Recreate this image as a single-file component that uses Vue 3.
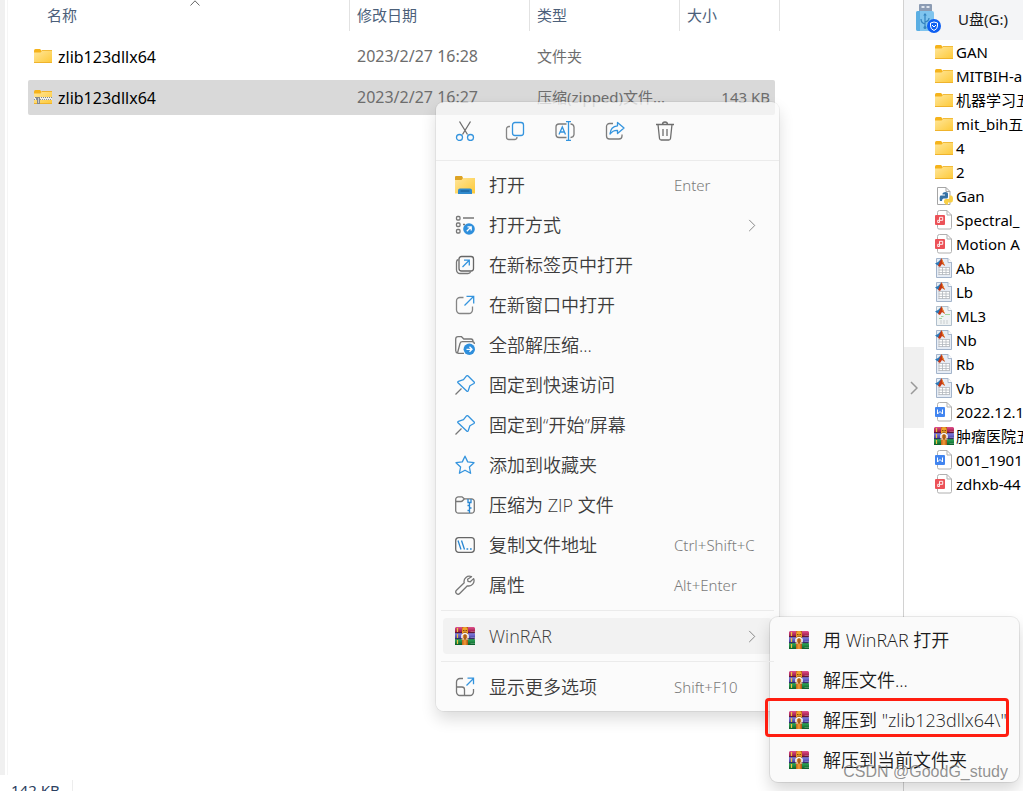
<template>
  <!-- Icon sprite -->
  <svg class="sprite" aria-hidden="true">
    <defs>
      <linearGradient id="g-folder" x1="0" y1="0" x2="1" y2="1">
        <stop offset="0" stop-color="#ffe69a" />
        <stop offset="1" stop-color="#fdc937" />
      </linearGradient>
      <linearGradient id="g-red" x1="0" y1="0" x2="0" y2="1">
        <stop offset="0" stop-color="#e0508c" />
        <stop offset="1" stop-color="#8c1038" />
      </linearGradient>
      <linearGradient id="g-blue" x1="0" y1="0" x2="0" y2="1">
        <stop offset="0" stop-color="#8a84e8" />
        <stop offset="1" stop-color="#3c3798" />
      </linearGradient>
      <linearGradient id="g-green" x1="0" y1="0" x2="0" y2="1">
        <stop offset="0" stop-color="#2fae5c" />
        <stop offset="1" stop-color="#0a5c28" />
      </linearGradient>
      <linearGradient id="g-belt" x1="0" y1="0" x2="1" y2="0">
        <stop offset="0" stop-color="#c0661a" />
        <stop offset="0.5" stop-color="#f59a38" />
        <stop offset="1" stop-color="#a8520e" />
      </linearGradient>
    </defs>

    <symbol id="i-folder" viewBox="0 0 18 14">
      <path d="M0 1.5Q0 0 1.5 0H6l2 2v3H0z" fill="#f5b31b" />
      <path d="M0 3.5h6.5L8 2h10v12H0z" fill="url(#g-folder)" />
      <path d="M8 1.500H18" stroke="#f2bb39" />
      <path d="M0 13.500H18" stroke="#efb32c" />
    </symbol>
    <symbol id="i-zip" viewBox="0 0 18 14">
      <path d="M0 1.500Q0 0 1.500 0H6l2 2v3H0z" fill="#f5b31b" />
      <path d="M0 3.500h6.500L8 1.500h10V14H0z" fill="url(#g-folder)" />
      <path d="M8 1.500H18M0 13.500H18" stroke="#efb32c" />
      <path d="M0 7h18v3H0z" fill="#f0efe9" />
      <path d="M1 7.500H18" stroke="#7d8790" stroke-dasharray="1 1" />
      <path d="M0 9.500H18" stroke="#8b939a" stroke-dasharray="1 1" />
      <path d="M2 7h4v7H3V9H2z" fill="#85898e" />
      <path d="M4.500 8v5" stroke="#c8ccd0" />
    </symbol>

    <symbol id="i-rar" viewBox="0 0 20 18">
      <path d="M1 0h18l1 1v4.500l-1 .5H0V1z" fill="url(#g-red)" />
      <path d="M0 6h19l1 .5V11l-1 1H0z" fill="url(#g-blue)" />
      <path d="M0 12h19l1 .5V18H0z" fill="url(#g-green)" />
      <path d="M0 5.800H20M0 11.800H20" stroke="#2b1c2c" stroke-width=".7" />
      <path d="M15.500 4.500H20M15.500 10.500H20M15.500 16.500H20" stroke="#fff" stroke-opacity=".3" stroke-width=".8" />
      <path d="M2.500 1v4M2.500 7v4M2.500 13v4" stroke="#efc13d" stroke-width="1.200" />
      <path d="M7 0h6v18H7z" fill="url(#g-belt)" />
      <path d="M7.500 1.500Q10-1 12.500 1.500L13 6H7z" fill="#f0a52c" />
      <path d="M8 3.500h1.500M10.500 3.500H12M8.500 5.300h3" stroke="#7d4107" stroke-width=".9" />
      <path d="M7 11V8.200Q10 4.800 13 8.200V11" fill="none" stroke="#f4f4f4" stroke-width="1.600" />
      <path d="M9.300 7.500h1.400v5H9.300z" fill="#8a4a12" />
      <path d="M6.500 12h2.500M11 12h2.500" stroke="#ddd" stroke-width="1.200" />
    </symbol>

    <symbol id="i-cut" viewBox="0 0 20 20">
      <g fill="none" stroke-width="1.300">
        <path d="M4.500.5l8 13M15.500.5l-8 13" stroke="#6e6e6e" />
        <circle cx="4.500" cy="16.500" r="3" stroke="#3494de" />
        <circle cx="15.500" cy="16.500" r="3" stroke="#3494de" />
      </g>
    </symbol>
    <symbol id="i-copy" viewBox="0 0 20 20">
      <g fill="none" stroke-width="1.300">
        <path d="M5 5.500H4A2.500 2.500 0 0 0 1.500 8v8A2.500 2.500 0 0 0 4 18.500h5.500A2.500 2.500 0 0 0 12 16" stroke="#868686" />
        <rect x="7.500" y="1.500" width="11" height="13" rx="2.500" stroke="#3494de" />
      </g>
    </symbol>
    <symbol id="i-rename" viewBox="0 0 20 20">
      <g fill="none" stroke-width="1.300">
        <path d="M11.500 3H4A3 3 0 0 0 1 6v7.500a3 3 0 0 0 3 3h7.500M15.500 3a3.500 3.500 0 0 1 3.500 3v7.500a3.500 3.500 0 0 1-3.500 3" stroke="#7c7c7c" />
        <path d="M4 13.500L7.300 6l3.200 7.500M5 11h4.500M13.500 1v18M11 .7h5M11 19.300h5" stroke="#3494de" />
      </g>
    </symbol>
    <symbol id="i-share" viewBox="0 0 20 20">
      <g fill="none" stroke-width="1.300" stroke-linejoin="round">
        <path d="M8 2.500H4.500A3 3 0 0 0 1.500 5.500V15a3 3 0 0 0 3 3H14a3 3 0 0 0 3-3v-1.500" stroke="#7c7c7c" />
        <path d="M12.500 1.500L19 7l-6.500 5.500V9.300Q8 9 5 13 5.500 5.500 12.500 4.800z" stroke="#3494de" />
      </g>
    </symbol>
    <symbol id="i-trash" viewBox="0 0 20 20">
      <path d="M1 3.500h18M7.500 3.500a2.500 2.500 0 0 1 5 0M3 3.500l1.500 14q.2 1.500 1.700 1.500h7.600q1.500 0 1.700-1.500L17 3.500M8 8v7M12 8v7" fill="none" stroke="#6e6e6e" stroke-width="1.300" />
    </symbol>

    <symbol id="i-open" viewBox="0 0 20 20">
      <path d="M0 2q0-1 1-1h6l1 2v3H0z" fill="#dda324" />
      <path d="M0 5h6.500L8 3h12v15.500H0z" fill="url(#g-folder)" />
      <path d="M3 19v-3.500a2 2 0 0 1 2-2h10a2 2 0 0 1 2 2V19z" fill="#2f89cc" />
      <path d="M5.500 16h9" stroke="#15558c" />
    </symbol>
    <symbol id="i-openwith" viewBox="0 0 20 20">
      <g fill="none" stroke="#777" stroke-width="1.300">
        <rect x="1.500" y="1.500" width="3.500" height="3.500" rx="1" />
        <rect x="1.500" y="8" width="3.500" height="3.500" rx="1" />
        <rect x="1.500" y="14.500" width="3.500" height="3.500" rx="1" />
        <path d="M8 3h11M8 9.500h2" />
      </g>
      <circle cx="14" cy="14" r="5.800" fill="#2f8fdc" />
      <path d="M11.800 16.200l4.200-4.200M12.500 11.800h3.700v3.700" fill="none" stroke="#fff" stroke-width="1.300" />
    </symbol>
    <symbol id="i-newtab" viewBox="0 0 20 20">
      <g fill="none" stroke-width="1.300">
        <rect x="4" y="1.500" width="14.500" height="14.500" rx="2.500" stroke="#666" />
        <path d="M3.500 4.500Q1.500 5 1.500 7v8a3.500 3.500 0 0 0 3.500 3.500h8q2 0 2.700-2" stroke="#777" />
        <path d="M7.500 12L14 5.500M9 5.200h5.300v5.300" stroke="#3494de" />
      </g>
    </symbol>
    <symbol id="i-newwin" viewBox="0 0 20 20">
      <g fill="none" stroke-width="1.300">
        <path d="M8.500 2.500H5A3.500 3.500 0 0 0 1.500 6v9A3.500 3.500 0 0 0 5 18.500h9a3.500 3.500 0 0 0 3.500-3.500v-3.500" stroke="#858585" />
        <path d="M9.500 10.500l9-9M11.500 1.300h7.200v7.200" stroke="#3494de" />
      </g>
    </symbol>
    <symbol id="i-extract" viewBox="0 0 20 20">
      <path d="M2.500 18Q.7 17.500.7 15.500V4Q.7 1.700 3 1.700h3.500l2.300 2.300H16Q18 4 18 6.500M2.500 18L5 8.500Q5.500 6.700 7.500 6.700H17q2.500 0 2.300 2.300M2.500 18.300H9" fill="none" stroke="#777" stroke-width="1.300" />
      <circle cx="14.300" cy="14.300" r="5.700" fill="#2f8fdc" />
      <path d="M11.500 14.300h5.300M14.500 11.800l2.500 2.500-2.500 2.500" fill="none" stroke="#fff" stroke-width="1.300" />
    </symbol>
    <symbol id="i-pin" viewBox="0 0 20 20">
      <g fill="none" stroke-width="1.300" stroke-linejoin="round">
        <path d="M.5 19.500l6-6" stroke="#777" />
        <path d="M11.500.9q.8-.6 1.600.1l6 6q.7.800-.2 1.500l-4 2.200-1.700 5q-.5 1.200-1.500.3L3 7.700q-.7-.8.400-1.300l5.100-1.700z" stroke="#3494de" />
      </g>
    </symbol>
    <symbol id="i-star" viewBox="0 0 20 20">
      <path d="M10 1.200l2.700 5.700 6.300.8-4.600 4.300 1.200 6.300L10 15.200l-5.600 3.100L5.600 12 1 7.700l6.300-.8z" fill="none" stroke="#3494de" stroke-width="1.300" stroke-linejoin="round" />
    </symbol>
    <symbol id="i-zipfolder" viewBox="0 0 20 20">
      <g fill="none" stroke-width="1.300">
        <path d="M.7 4.500A2.700 2.700 0 0 1 3.400 1.800H7l2.300 2h7.300a2.700 2.700 0 0 1 2.700 2.700v9a2.700 2.700 0 0 1-2.700 2.700H3.400A2.700 2.700 0 0 1 .7 15.500zM.7 6.500H6q1 0 1.800-1L9.300 4" stroke="#777" />
        <path d="M13 4v3.500h3V4M14.500 7.500v10.500M12.500 10.500h2M14.500 13h2M12.500 15.500h2" stroke="#2886d2" />
      </g>
    </symbol>
    <symbol id="i-path" viewBox="0 0 20 20">
      <g fill="none" stroke-width="1.300">
        <rect x=".7" y="2.700" width="18.600" height="14.600" rx="3" stroke="#666" />
        <path d="M3 5.500l3 9M6.500 5.500l3 9M11.500 14h1.700M15 14h1.700" stroke="#2886d2" />
      </g>
    </symbol>
    <symbol id="i-wrench" viewBox="0 0 20 20">
      <path d="M16.500 1.700a5.300 5.300 0 0 0-7.300 6.100L1.500 15.300a2.200 2.200 0 0 0 3.200 3.200l7.700-7.700a5.300 5.300 0 0 0 6.200-7.200l-3.300 3.200-2.300-.4-.4-2.200z" fill="none" stroke="#777" stroke-width="1.300" stroke-linejoin="round" />
    </symbol>
    <symbol id="i-more" viewBox="0 0 20 20">
      <g fill="none" stroke-width="1.300">
        <path d="M8 1.500H5A3.500 3.500 0 0 0 1.500 5v10A3.500 3.500 0 0 0 5 18.500h10a3.500 3.500 0 0 0 3.500-3.500v-3M1.500 10H7q2.500 0 2.500 2.500v6" stroke="#777" />
        <path d="M11.500 8.500l7-7M12.500 1.200h6v6" stroke="#3494de" />
      </g>
    </symbol>

    <symbol id="i-python" viewBox="0 0 18 18">
      <path d="M2.500.5H11l4 4v13H2.500z" fill="#fff" stroke="#a5a5a5" />
      <path d="M11 .5v4h4" fill="none" stroke="#a5a5a5" />
      <path d="M9 15.500V14q0-2 2-2h2q1.500 0 1.500-1.500V8.500H16q2 0 2 3.500t-2 3.500h-3v2q-2 1-4-2z" fill="#f8cf46" />
      <path d="M5 14q-1-4 .5-5.500H10V7.500H7.500V6.500Q8 5 10.500 5T13 6.500v3.500q0 1.500-1.500 1.500H8.500Q7 11.500 7 14z" fill="#3572a5" />
    </symbol>
    <symbol id="i-pdf" viewBox="0 0 18 20">
      <path d="M4.500.5H12L16.500 5v12.500q0 1.500-1.500 1.500H4q-1.500 0-1.500-1.500v-15Q2.500.5 4.500.5z" fill="#fff" stroke="#b0b0b0" />
      <path d="M12 .5V5h4.500" fill="none" stroke="#b0b0b0" />
      <rect y="5" width="10" height="10" rx="1" fill="#ec5258" />
      <path d="M4.500 7.300h3.200v3H4.500zM4.500 10.300H2.700v2.200h1.800z" fill="none" stroke="#fff" stroke-width=".9" />
    </symbol>
    <symbol id="i-doc" viewBox="0 0 18 20">
      <path d="M4.500.5H12L16.500 5v12.500q0 1.500-1.500 1.500H4q-1.500 0-1.500-1.500v-15Q2.500.5 4.500.5z" fill="#fff" stroke="#b0b0b0" />
      <path d="M12 .5V5h4.500" fill="none" stroke="#b0b0b0" />
      <rect y="5" width="10" height="10" rx="1" fill="#4285f0" />
      <path d="M2.500 7.500v4.500L5 9.500 7.500 12V7.500" fill="none" stroke="#fff" />
    </symbol>
    <symbol id="i-mat" viewBox="0 0 18 20">
      <path d="M1.500.5H13L16.500 4.500v15h-15z" fill="#e6ecf5" stroke="#a3b4cb" />
      <path d="M13 .5v4h4" fill="#fff" stroke="#a9b8cd" />
      <path d="M3.500 9.500h11v7h-11z" fill="#fff" />
      <path d="M3.500 9.500h11M3.500 12h11M3.500 14.500h11M3.500 16.500h11M4 9v8M7.500 9v8M11 9v8M14.500 9v8" stroke="#b3b8be" stroke-width=".8" />
      <path d="M0 5.500L3 4l3-3v5L3.500 8z" fill="#2a78b8" />
      <path d="M3 8L6.500 0 10 8 7 6 5 9z" fill="#c43716" />
      <path d="M6.500 0L10 8 7.500 5z" fill="#ef8a2b" />
    </symbol>
    <symbol id="i-fig" viewBox="0 0 18 20">
      <path d="M1.500.5H13L16.500 4.500v15h-15z" fill="#eef2f3" stroke="#b0bfcd" />
      <path d="M13 .5v4h4" fill="#fff" stroke="#b5c3cf" />
      <path d="M6 10.500h2.500M10 8.500h5M4 12.500h3" stroke="#9fd49d" />
      <path d="M5 15h9M5 17h9" stroke="#c9ced0" stroke-dasharray="2 1" />
      <path d="M0 5.500L3 4l3-3v5L3.500 8z" fill="#2a78b8" />
      <path d="M3 8L6.500 0 10 8 7 6 5 9z" fill="#c43716" />
      <path d="M6.500 0L10 8 7.500 5z" fill="#ef8a2b" />
    </symbol>
    <symbol id="i-usb" viewBox="0 0 26 30">
      <rect x="3" width="13" height="8" rx="1" fill="#8b9bb3" />
      <path d="M5.500 3h3M10.500 3h3" stroke="#dfe6ef" stroke-width="2" />
      <rect y="7" width="18" height="20" rx="2" fill="#7fc4ee" />
      <path d="M0 9q0-2 2-2h2v20H2q-2 0-2-2z" fill="#5aaee3" />
      <path d="M9 10.500v13M9 20q-4-1-4-5M9 18q4-1 4-4" fill="none" stroke="#3383c0" stroke-width="1.200" />
      <path d="M9 9l1.800 2.500H7.200z" fill="#3383c0" />
      <circle cx="9" cy="23.500" r="1.500" fill="#3383c0" />
      <circle cx="18" cy="22" r="7" fill="#0e5ff2" />
      <path d="M14.500 19l3.500-1 3.500 1v3q0 3-3.500 4.500Q14.500 25 14.500 22z" fill="none" stroke="#fff" />
      <path d="M16 21l2 2 2-2" fill="none" stroke="#fff" />
    </symbol>
  </svg>

  <div class="desktop">
    <main class="explorer">
      <div class="file-area">
        <table class="files">
          <thead>
            <tr>
              <th v-for="col in columns" :key="col.id" :class="`col-${col.id}`">
                <span class="head">{{ col.label }}</span>
                <svg v-if="col.sorted" class="sort" viewBox="0 0 10 6" aria-hidden="true">
                  <path d="M.5 5.500L5 .8l4.500 4.700" />
                </svg>
              </th>
            </tr>
          </thead>
          <tbody>
            <tr v-for="file in files" :key="file.icon" :class="{ selected: file.selected }">
              <td class="file-name">
                <svg class="file-icon" aria-hidden="true"><use :href="`#i-${file.icon}`" /></svg>
                <span>{{ file.name }}</span>
              </td>
              <td class="date">{{ file.date }}</td>
              <td>{{ file.type }}</td>
              <td class="size">{{ file.size }}</td>
            </tr>
          </tbody>
        </table>
      </div>
      <footer class="status"><span>142 KB</span></footer>
    </main>

    <aside class="drive">
      <header class="drive-head">
        <svg class="usb" aria-hidden="true"><use href="#i-usb" /></svg>
        <span>U盘(G:)</span>
      </header>
      <ul class="drive-list">
        <li v-for="item in driveItems" :key="item.name">
          <svg class="drive-icon" :class="item.icon" aria-hidden="true"><use :href="`#i-${item.icon}`" /></svg>
          <span>{{ item.name }}</span>
        </li>
      </ul>
      <button class="collapse" type="button" aria-label="收起">
        <svg viewBox="0 0 8 14" aria-hidden="true"><path d="M1 1l6 6-6 6" /></svg>
      </button>
    </aside>

    <div class="menu" role="menu">
      <div class="tools">
        <button v-for="tool in tools" :key="tool.icon" type="button" :aria-label="tool.label">
          <svg aria-hidden="true"><use :href="`#i-${tool.icon}`" /></svg>
        </button>
      </div>
      <ul class="items">
        <li v-for="item in menuItems" :key="item.label" :class="{ divided: item.divided }">
          <button
            class="item"
            :class="{ active: item.children && submenuOpen }"
            type="button"
            role="menuitem"
            @click="item.children && toggleSubmenu()"
          >
            <svg class="item-icon" :class="item.icon" aria-hidden="true"><use :href="`#i-${item.icon}`" /></svg>
            <span>{{ item.label }}</span>
            <kbd v-if="item.keys">{{ item.keys }}</kbd>
            <svg v-if="item.arrow" class="arrow" viewBox="0 0 8 14" aria-hidden="true">
              <path d="M1 1l6 6-6 6" />
            </svg>
          </button>
          <ul v-if="item.children && submenuOpen" class="submenu" role="menu">
            <li v-for="child in item.children" :key="child" :class="{ marked: child === marked }">
              <button class="item" type="button" role="menuitem">
                <svg class="item-icon rar" aria-hidden="true"><use href="#i-rar" /></svg>
                <span>{{ child }}</span>
              </button>
            </li>
          </ul>
        </li>
      </ul>
    </div>

    <div class="watermark">CSDN @GoodG_study</div>
  </div>
</template>

<script setup>
import { ref } from 'vue';

const submenuOpen = ref(true);
const marked = '解压到 "zlib123dllx64\\"';

const columns = [
  { id: 'name', label: '名称', sorted: true },
  { id: 'date', label: '修改日期' },
  { id: 'type', label: '类型' },
  { id: 'size', label: '大小' },
];

const files = [
  { icon: 'folder', name: 'zlib123dllx64', date: '2023/2/27 16:28', type: '文件夹', size: '' },
  { icon: 'zip', name: 'zlib123dllx64', date: '2023/2/27 16:27', type: '压缩(zipped)文件...', size: '143 KB', selected: true },
];

const driveItems = [
  { icon: 'folder', name: 'GAN' },
  { icon: 'folder', name: 'MITBIH-a' },
  { icon: 'folder', name: '机器学习五' },
  { icon: 'folder', name: 'mit_bih五' },
  { icon: 'folder', name: '4' },
  { icon: 'folder', name: '2' },
  { icon: 'python', name: 'Gan' },
  { icon: 'pdf', name: 'Spectral_' },
  { icon: 'pdf', name: 'Motion A' },
  { icon: 'mat', name: 'Ab' },
  { icon: 'mat', name: 'Lb' },
  { icon: 'fig', name: 'ML3' },
  { icon: 'mat', name: 'Nb' },
  { icon: 'mat', name: 'Rb' },
  { icon: 'mat', name: 'Vb' },
  { icon: 'doc', name: '2022.12.1' },
  { icon: 'rar', name: '肿瘤医院五' },
  { icon: 'doc', name: '001_1901' },
  { icon: 'pdf', name: 'zdhxb-44' },
];

const tools = [
  { icon: 'cut', label: '剪切' },
  { icon: 'copy', label: '复制' },
  { icon: 'rename', label: '重命名' },
  { icon: 'share', label: '共享' },
  { icon: 'trash', label: '删除' },
];

const menuItems = [
  { icon: 'open', label: '打开', keys: 'Enter' },
  { icon: 'openwith', label: '打开方式', arrow: true },
  { icon: 'newtab', label: '在新标签页中打开' },
  { icon: 'newwin', label: '在新窗口中打开' },
  { icon: 'extract', label: '全部解压缩...' },
  { icon: 'pin', label: '固定到快速访问' },
  { icon: 'pin', label: '固定到“开始”屏幕' },
  { icon: 'star', label: '添加到收藏夹' },
  { icon: 'zipfolder', label: '压缩为 ZIP 文件' },
  { icon: 'path', label: '复制文件地址', keys: 'Ctrl+Shift+C' },
  { icon: 'wrench', label: '属性', keys: 'Alt+Enter' },
  {
    icon: 'rar',
    label: 'WinRAR',
    arrow: true,
    divided: true,
    children: ['用 WinRAR 打开', '解压文件...', marked, '解压到当前文件夹'],
  },
  { icon: 'more', label: '显示更多选项', keys: 'Shift+F10', divided: true },
];

const toggleSubmenu = () => {
  submenuOpen.value = !submenuOpen.value;
};
</script>

<style>
body {
  background: #fff;
  overflow: hidden;
}
</style>

<style scoped>
* {
  box-sizing: border-box;
}

ul {
  list-style: none;
  margin: 0;
  padding: 0;
}

button {
  border: 0;
  padding: 0;
  background: none;
  color: inherit;
  font: inherit;
  text-align: left;
}

.sprite {
  position: absolute;
  width: 0;
  height: 0;
}

.desktop {
  position: relative;
  display: flex;
  height: 100vh;
  overflow: hidden;
  font-family: "Noto Sans", "Noto Sans CJK SC", sans-serif;
  font-size: 15px;
  line-height: 20px;
  color: #1a1a1a;
}

/* --- File list --- */
.explorer {
  flex: 1;
  min-width: 0;
  display: flex;
  flex-direction: column;
}

.file-area {
  flex: 1;
  border-left: 5px solid #f0f0f0;
  padding-left: 23px;
  background: linear-gradient(#f5f5f5, #f5f5f5) 2px 0 / 1px 100% no-repeat;
}

.files {
  width: 747px;
  margin-top: -6px;
  table-layout: fixed;
  border-collapse: separate;
  border-spacing: 0 6px;
  color: #6d6d6d;
}

.files th {
  position: relative;
  height: 33px;
  padding: 0;
  vertical-align: top;
  text-align: left;
  font-weight: 400;
  color: #4c607a;
}

.col-name { width: 322px; }
.col-date { width: 180px; }
.col-type { width: 150px; }

.head {
  display: block;
  height: 31px;
  padding: 5px 0 6px 7px;
  border-right: 1px solid #e2e2e2;
}

.col-name .head {
  padding-left: 19px;
}

.col-size .head {
  margin-right: -5px;
}

.sort {
  position: absolute;
  top: 0;
  left: 162px;
  width: 10px;
  height: 6px;
  fill: none;
  stroke: #666;
}

.files td {
  height: 35px;
  padding: 0 0 2px 7px;
  white-space: nowrap;
}

.files .file-name {
  padding-left: 6px;
  color: #000;
  font-size: 16px;
}

.files .date {
  font-size: 16px;
}

.file-name span {
  vertical-align: middle;
}

.file-icon {
  width: 18px;
  height: 14px;
  margin-right: 6px;
  vertical-align: middle;
}

.files .size {
  padding-right: 5px;
  text-align: right;
}

.selected td {
  background: #d9d9d9;
}

.selected td:first-child { border-radius: 2px 0 0 2px; }
.selected td:last-child { border-radius: 0 2px 2px 0; }

.status {
  height: 16px;
  padding: 5px 0 0 11px;
  overflow: hidden;
  color: #2b4060;
}

.status span {
  display: inline-block;
  padding-right: 12px;
  border-right: 1px solid #ededed;
}

/* --- Drive pane --- */
.drive {
  position: relative;
  width: 120px;
  border-left: 1px solid #d2d2d2;
  overflow: hidden;
  white-space: nowrap;
}

.drive-head {
  display: flex;
  align-items: center;
  gap: 16px;
  height: 40px;
  padding: 0 0 2px 12px;
  background: #f4f5f7;
}

.usb {
  width: 26px;
  height: 30px;
}

.drive-list {
  padding-left: 31px;
}

.drive-list li {
  display: flex;
  align-items: center;
  gap: 3px;
  height: 24px;
  color: #000;
}

.drive-icon {
  flex: none;
  width: 18px;
  height: 20px;
}

.drive-icon.folder {
  height: 14px;
}

.drive-icon.rar {
  width: 20px;
  height: 18px;
  margin: 0 -1px;
}

.collapse {
  position: absolute;
  top: 347px;
  left: 0;
  display: grid;
  place-items: center;
  width: 20px;
  height: 81px;
  background: #f0f0f0;
}

.collapse svg {
  width: 8px;
  height: 14px;
  fill: none;
  stroke: #999;
  stroke-width: 1.5;
}

/* --- Context menu --- */
.menu {
  position: absolute;
  top: 102px;
  left: 436px;
  width: 343px;
  border-radius: 8px;
  background: rgba(250, 250, 250, 0.74);
  box-shadow: 0 0 0 1px rgba(0, 0, 0, 0.05), 0 8px 16px rgba(0, 0, 0, 0.14);
  color: #3c3c3c;
  font-family: "Open Sans", "Noto Sans CJK SC", sans-serif;
  font-size: 18px;
  font-weight: 350;
}

.tools {
  display: flex;
  height: 59px;
  padding-left: 4px;
  border-bottom: 1px solid #ebebeb;
}

.tools button {
  display: grid;
  place-items: center;
  width: 50px;
}

.tools svg {
  width: 20px;
  height: 20px;
}

.items {
  padding: 4px 0;
}

.items li {
  position: relative;
  height: 40px;
  padding: 2px 7px;
}

.items > .divided {
  margin-top: 11px;
}

.items > .divided::before {
  content: '';
  position: absolute;
  top: -6px;
  left: 5px;
  right: 5px;
  height: 1px;
  background: #ebebeb;
}

.item {
  display: grid;
  grid-template-columns: 20px 1fr 91px;
  column-gap: 14px;
  align-items: center;
  width: 100%;
  height: 36px;
  padding: 0 7px 0 12px;
  border-radius: 4px;
  white-space: nowrap;
}

.item.active {
  background: #f2f2f2;
}

.item-icon {
  width: 20px;
  height: 20px;
}

.item-icon.rar {
  height: 18px;
}

.item kbd {
  font-family: "Noto Sans", sans-serif;
  font-size: 15px;
  color: #7a7a7a;
}

.arrow {
  justify-self: end;
  width: 8px;
  height: 13px;
  margin-right: 9px;
  fill: none;
  stroke: #7d7d7d;
}

/* --- WinRAR submenu --- */
.submenu {
  position: absolute;
  top: 1px;
  left: 334px;
  width: 249px;
  padding: 3px 0 2px;
  border-radius: 8px;
  background: #fafafa;
  box-shadow: 0 0 0 1px rgba(0, 0, 0, 0.08), 0 8px 16px rgba(0, 0, 0, 0.16);
  color: #1a1a1a;
}

.submenu .item {
  grid-template-columns: 20px 1fr;
}

.marked::after {
  content: '';
  position: absolute;
  inset: -2px 10px 3px -5px;
  border: 3px solid #ff1d10;
  border-radius: 4px;
  pointer-events: none;
}

.watermark {
  position: absolute;
  right: 15px;
  bottom: 9px;
  font-family: "Liberation Sans", sans-serif;
  font-size: 16px;
  color: rgba(110, 110, 110, 0.75);
}
</style>
